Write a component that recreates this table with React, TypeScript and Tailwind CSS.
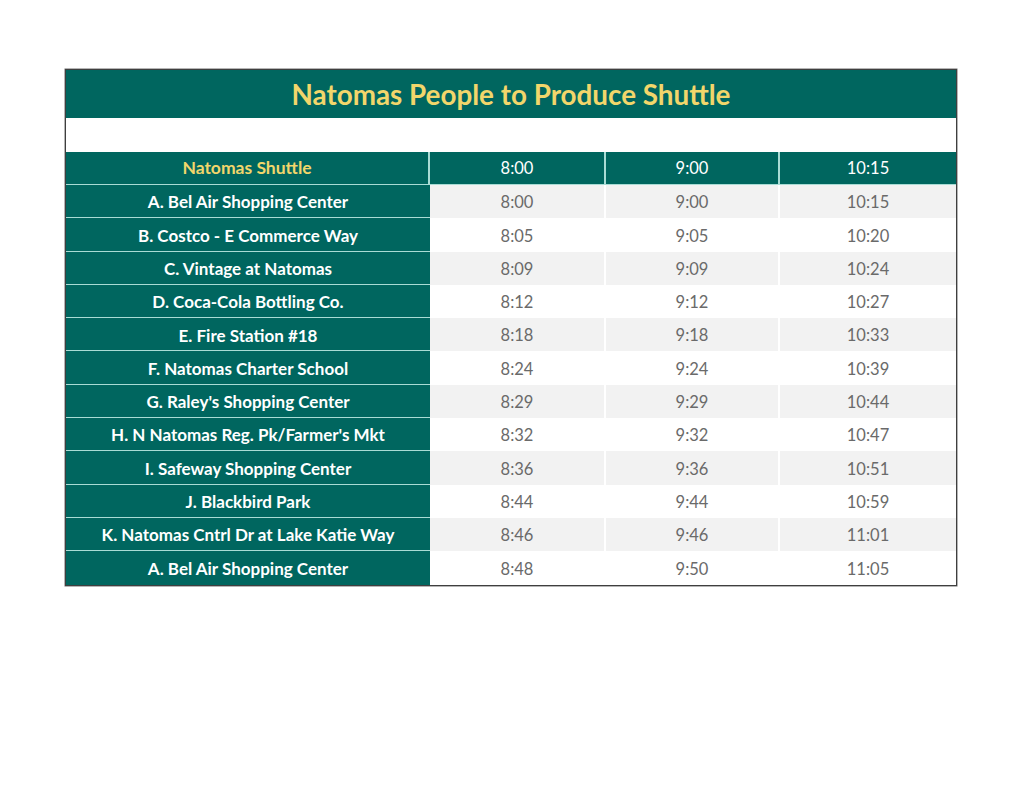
const stops: [string, string, string, string][] = [
  ["A. Bel Air Shopping Center", "8:00", "9:00", "10:15"],
  ["B. Costco - E Commerce Way", "8:05", "9:05", "10:20"],
  ["C. Vintage at Natomas", "8:09", "9:09", "10:24"],
  ["D. Coca-Cola Bottling Co.", "8:12", "9:12", "10:27"],
  ["E. Fire Station #18", "8:18", "9:18", "10:33"],
  ["F. Natomas Charter School", "8:24", "9:24", "10:39"],
  ["G. Raley's Shopping Center", "8:29", "9:29", "10:44"],
  ["H. N Natomas Reg. Pk/Farmer's Mkt", "8:32", "9:32", "10:47"],
  ["I. Safeway Shopping Center", "8:36", "9:36", "10:51"],
  ["J. Blackbird Park", "8:44", "9:44", "10:59"],
  ["K. Natomas Cntrl Dr at Lake Katie Way", "8:46", "9:46", "11:01"],
  ["A. Bel Air Shopping Center", "8:48", "9:50", "11:05"],
];

const widths = ["w-[176px]", "w-[174px]", "w-[176px]"];

export default function App() {
  return (
    <div
      className="w-[1024px] h-[791px] bg-white pt-[69px] pl-[65px]"
      style={{ fontFamily: "Lato, 'Noto Sans', sans-serif" }}
    >
      <div className="w-[892px] border border-[#3f3f3f] shadow-[0_0_0_0.5px_#6b6b6b]">
        <div className="h-[48px] bg-[#00665f] flex items-center justify-center pt-[2px]">
          <h1 className="text-[27.8px] font-bold text-[#f2d66b]">
            Natomas People to Produce Shuttle
          </h1>
        </div>
        <div className="h-[34px] bg-white" />
        <div className="flex h-[33px] bg-[#00665f] border-b border-[#a9dcd5]">
          <div className="w-[364px] flex items-center justify-center pt-[1px] text-[17.5px] font-bold text-[#f2d66b] border-r-2 border-[#a9dcd5]">
            Natomas Shuttle
          </div>
          {["8:00", "9:00", "10:15"].map((t, i) => (
            <div
              key={t}
              className={`${widths[i]} flex items-center justify-center pt-[1px] text-[16.5px] text-white ${i < 2 ? "border-r-2 border-[#a9dcd5]" : ""}`}
            >
              {t}
            </div>
          ))}
        </div>
        {stops.map((s, r) => (
          <div key={r} className="flex h-[33.3px]">
            <div
              className={`w-[364px] bg-[#00665f] flex items-center justify-center pt-[2px] text-[17px] font-bold text-white whitespace-nowrap ${r < stops.length - 1 ? "border-b border-[#a9dcd5]" : ""}`}
            >
              {s[0]}
            </div>
            {s.slice(1).map((t, i) => (
              <div
                key={i}
                className={`${widths[i]} flex items-center justify-center pt-[2px] text-[16.5px] text-[#6a6a6a] ${r % 2 === 0 ? "bg-[#f2f2f2]" : "bg-white"} ${i < 2 ? "border-r-2 border-white" : ""}`}
              >
                {t}
              </div>
            ))}
          </div>
        ))}
      </div>
    </div>
  );
}
